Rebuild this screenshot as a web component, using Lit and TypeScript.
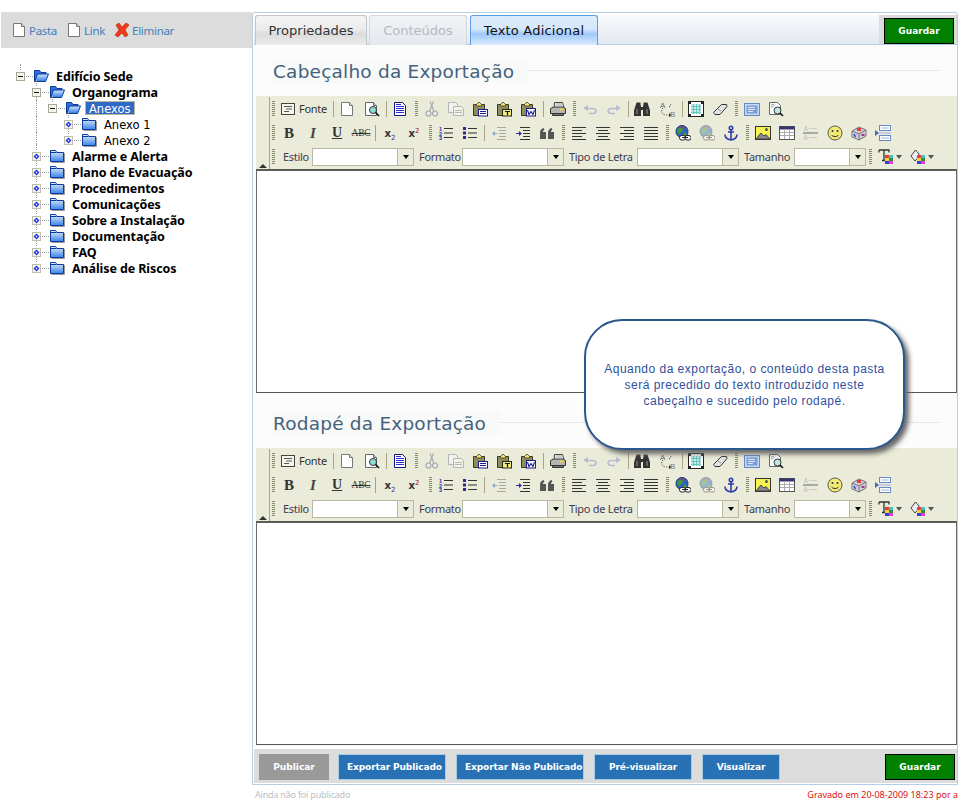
import { LitElement, html, css, svg } from "lit";
import { customElement } from "lit/decorators.js";
import { classMap } from "lit/directives/class-map.js";

const page = svg`<path d="M2.500 1.500h8l3 3v10h-11z" fill="#fff" stroke="#777"/><path d="M10.500 1.500v3h3" fill="#ddd" stroke="#777"/>`;
const clip = svg`<path d="M1.500 3.500h11v11h-11z" fill="#8f8c5c" stroke="#3b3a20"/><path d="M4.500 3.500l2.500-2.500 2.500 2.500v1.500h-5z" fill="#f2e27a" stroke="#3b3a20" stroke-width=".8"/>`;
const lines = (ys: number[], x1: number[], x2: number[], c = "#333") => ys.map((y, i) => svg`<path d="M${x1[i % x1.length]} ${y}.5H${x2[i % x2.length]}" stroke="${c}"/>`);
const swatch = (x: number, y: number) => svg`<rect x="${x}" y="${y}" width="4" height="3" fill="#e83a3a"/><rect x="${x + 4}" y="${y}" width="4" height="3" fill="#39c6c6"/><rect x="${x}" y="${y + 3}" width="4" height="3" fill="#e8d63a"/><rect x="${x + 4}" y="${y + 3}" width="4" height="3" fill="#3a8a3a"/><rect x="${x}" y="${y + 6}" width="4" height="3" fill="#3a3ae8"/><rect x="${x + 4}" y="${y + 6}" width="4" height="3" fill="#e83ad6"/>`;
const globe = svg`<circle cx="7" cy="6.500" r="6" fill="#2f62c4" stroke="#123a7c"/><path d="M3 3.500l3-1 2 2-1 2.500-2 .5-1.500 2-1-3zM8.500 7.500l3 .5-.5 3-2 1z" fill="#3f9a3c"/><path d="M5 2l3-.5 2 1.500-2 1z" fill="#c03a2e"/>`;
const chain = svg`<rect x="4.500" y="10.500" width="6" height="4.500" rx="2" fill="#fff" stroke="#222"/><rect x="10" y="10.500" width="6" height="4.500" rx="2" fill="#fff" stroke="#222"/><path d="M7 12.500h6" stroke="#222"/>`;

const icons: Record<string, unknown> = {
  source: svg`<rect x="1.500" y="2.500" width="13" height="11" fill="#f5f5ea" stroke="#444"/><path d="M4 5.500h8M6 8h6M4 10.500h5" stroke="#555"/>`,
  new: page,
  preview: svg`<path d="M1.500 1.500h8l3 3v10h-11z" fill="#fff" stroke="#666"/><path d="M9.500 1.500v3h3" fill="#ddd" stroke="#666"/><circle cx="9" cy="9" r="3.500" fill="#8fdcd6" stroke="#333"/><path d="M11.500 11.500l3.500 3.500" stroke="#111" stroke-width="1.600"/>`,
  templates: svg`<path d="M2.500 1.500h8l3 3v10h-11z" fill="#fff" stroke="#15157e"/><path d="M4 3.500h5M4 5.500h8M4 7.500h8M4 9.500h8M4 11.500h8" stroke="#2a2ad8"/>`,
  cut: svg`<g fill="none" stroke="#a8a8b4" stroke-width="1.200"><circle cx="4.500" cy="12.500" r="2.500"/><circle cx="11" cy="12.500" r="2.500"/><path d="M5.500 10l4-9.500M10 10L6 .5"/></g>`,
  copy: svg`<g fill="#f3f3ea" stroke="#b4b4ba"><path d="M0.500 1.500h7l2 2v8h-9z"/><path d="M5.500 5.500h8l2 2v7h-10z"/><path d="M7 9.500h7M7 11.500h7" fill="none"/></g>`,
  paste: svg`${clip}<rect x="6.500" y="8.500" width="9" height="6.500" fill="#fff" stroke="#1c1c8c"/><path d="M8 10.500h6M8 12.500h6" stroke="#1c1c8c"/>`,
  pastetext: svg`${clip}<rect x="6.500" y="8.500" width="9" height="6.500" fill="#f6ee7a" stroke="#222"/><path d="M9 10.500h5M11.500 10.500v3.500" stroke="#111" stroke-width="1.200"/>`,
  pasteword: svg`${clip}<rect x="6.500" y="7.500" width="9" height="7.500" fill="#fff" stroke="#1c1c8c"/><path d="M7.500 9l1.500 4.500 2-3 2 3L14.500 9" fill="none" stroke="#1c1c8c" stroke-width="1.100"/>`,
  print: svg`<path d="M4.500 1.500h8l1.500 5h-10z" fill="#fff" stroke="#444"/><path d="M0.500 7.500l3-1.500h9.500l2.500 1.500v5h-15z" fill="#b6b6b0" stroke="#333"/><path d="M2.500 12.500h11v2h-11z" fill="#777" stroke="#333"/><path d="M10 8.500h3" stroke="#e8d63a" stroke-width="2"/><path d="M5.500 3h7M5.500 5h7" stroke="#999"/>`,
  undo: svg`<path d="M3 7.500h7c2.500 0 4 1 4 2.500s-1 2.500-3.500 2.500H7" fill="none" stroke="#b8bcd0" stroke-width="1.500"/><path d="M1 7l5-3v6z" fill="#b8bcd0"/>`,
  redo: svg`<path d="M13 7.500H6c-2.500 0-4 1-4 2.500s1 2.500 3.500 2.500H9" fill="none" stroke="#b8bcd0" stroke-width="1.500"/><path d="M15 7l-5-3v6z" fill="#b8bcd0"/>`,
  find: svg`<g fill="#333"><path d="M2.500 1.500h4v3h.5V15H0V9.500z"/><path d="M13.500 1.500h-4v3H9V15h7V9.500z"/><rect x="6.500" y="6" width="3" height="3"/></g><path d="M3 8v5M13 8v5" stroke="#999"/>`,
  replace: svg`<path d="M4 7c-2.500 3-1.500 6.500 3 7h4M10 6c2-1 2-2 1.500-4" fill="none" stroke="#333" stroke-dasharray="1 1.500"/><path d="M10 12l2.500 2-2.500 2z" fill="#333"/><text x="1" y="6.500" font-family="Liberation Sans" font-size="8" fill="#666">A</text><text x="11" y="15.500" font-family="Liberation Sans" font-size="8" fill="#777">B</text>`,
  selectall: svg`<rect x="0.500" y="0.500" width="15" height="15" fill="#fff" stroke="#222"/><path d="M3 3h10v10H3z" fill="#c4eeeb"/><path d="M3 5.500h10M3 8.500h10M3 11.500h10M5.500 3v10M8.500 3v10M11.500 3v10" stroke="#6cc6bf"/><path d="M0 0h3v3H0zM13 0h3v3h-3zM0 13h3v3H0zM13 13h3v3h-3z" fill="#222"/>`,
  eraser: svg`<path d="M1.500 11.500l8-8h5l.5 2-7 8h-5z" fill="#e4e4e4" stroke="#333"/><path d="M5.500 8l3.500 2" stroke="#999"/>`,
  maximize: svg`<rect x="0.500" y="2.500" width="15" height="12" fill="#c8d8f4" stroke="#6a8ac4"/><rect x="2.500" y="4.500" width="11" height="8" fill="#7a9edc"/><path d="M4 6.500h7M4 8.500h7M4 10.500h5" stroke="#e0e8f8"/>`,
  blocks: svg`<path d="M1.500 1.500h8l3 3v9h-11z" fill="#fff" stroke="#666"/><text x="3" y="7" font-family="Liberation Sans" font-size="5" fill="#888">P</text><circle cx="9.500" cy="9.500" r="3.500" fill="#bfe8e4" stroke="#333"/><path d="M12 12l3 3" stroke="#111" stroke-width="1.600"/>`,
  ol: svg`<path d="M6 3.500h9M6 8h9M6 12.500h9" stroke="#333"/><text x="1" y="6" font-family="Liberation Sans" font-weight="bold" font-size="5.500" fill="#2a2ab0">1</text><text x="1" y="10.500" font-family="Liberation Sans" font-weight="bold" font-size="5.500" fill="#2a2ab0">2</text><text x="1" y="15" font-family="Liberation Sans" font-weight="bold" font-size="5.500" fill="#2a2ab0">3</text>`,
  ul: svg`<path d="M6 3.500h9M6 8h9M6 12.500h9" stroke="#333"/><path d="M1 2h3v3H1zM1 6.500h3v3H1zM1 11h3v3H1z" fill="#2a2a90"/>`,
  outdent: svg`<g stroke="#a8a8a0"><path d="M6 2.500h9M8 5.500h7M8 8.500h7M8 11.500h7M6 14.500h9"/></g><path d="M1 8.500h5" stroke="#8fa8d0"/><path d="M1 8.500l3-2.500v5z" fill="#8fa8d0"/>`,
  indent: svg`<g stroke="#333"><path d="M5 2.500h10M8 5.500h7M8 8.500h7M8 11.500h7M5 14.500h10"/></g><path d="M1 8.500h5" stroke="#2a2ab0"/><path d="M7 8.500l-3-2.500v5z" fill="#2a2ab0"/>`,
  quote: svg`<path d="M1 14V8c0-2.500 1-4 3.500-5l1 1.500C4.500 5 4 5.700 4 7h3v7zM9 14V8c0-2.500 1-4 3.500-5l1 1.500c-1 .5-1.500 1.200-1.500 2.500h3v7z" fill="#555"/>`,
  left: lines([2, 5, 8, 11, 14], [1], [15, 11, 15, 11, 15]),
  center: lines([2, 5, 8, 11, 14], [1, 3], [15, 13]),
  right: lines([2, 5, 8, 11, 14], [1, 5], [15]),
  justify: lines([2, 5, 8, 11, 14], [1], [15]),
  link: svg`${globe}${chain}`,
  unlink: svg`<g opacity=".42">${globe}${chain}</g>`,
  anchor: svg`<g fill="none" stroke="#2e3ea8" stroke-width="1.600"><circle cx="8" cy="3" r="1.700"/><path d="M8 5v10M5 7h6M2 9.500c0 3 3 5 6 5.500 3-.5 6-2.500 6-5.500"/></g>`,
  image: svg`<rect x="0.500" y="1.500" width="15" height="13" fill="#f6f050" stroke="#333"/><circle cx="11.500" cy="4.500" r="1.500" fill="#555"/><path d="M1 14l5-6 3 3 2-1.500 4 4.500z" fill="#888" stroke="#444"/>`,
  table: svg`<rect x="0.500" y="1.500" width="15" height="13" fill="#fff" stroke="#555"/><rect x="0.500" y="1.500" width="15" height="3" fill="#34346e"/><path d="M1 7.500h14M1 10.500h14M5.500 4v10M10.500 4v10" stroke="#aaa"/>`,
  hr: svg`<text x="0.500" y="6" font-family="Liberation Sans" font-size="6.500" fill="#bbb">A</text><text x="0.500" y="15" font-family="Liberation Sans" font-size="6.500" fill="#bbb">A</text><path d="M6 3.500h8M6 12.500h8" stroke="#ccc"/><path d="M0 8h15" stroke="#a8a8a8" stroke-width="2"/>`,
  smiley: svg`<circle cx="8" cy="8" r="7" fill="#f2ea72" stroke="#555"/><circle cx="5.500" cy="6" r="1" fill="#333"/><circle cx="10.500" cy="6" r="1" fill="#333"/><path d="M4.500 10c1 2 6 2 7 0" fill="none" stroke="#333"/>`,
  special: svg`<path d="M1 6l7-4 7 3v6l-7 4-7-3z" fill="#cfccd2" stroke="#777"/><path d="M1 6l7 3 7-4M8 9v6" fill="none" stroke="#777"/><rect x="6" y="3" width="4" height="3" fill="#e04040"/><path d="M3 9l1.500 3" stroke="#3a3ae8" stroke-width="1.500"/><path d="M10.500 10h3" stroke="#a03a9a" stroke-width="2"/>`,
  pagebreak: svg`<rect x="4.500" y="0.500" width="11" height="5" fill="#fff" stroke="#6a8ac4"/><rect x="4.500" y="10.500" width="11" height="5" fill="#fff" stroke="#6a8ac4"/><path d="M6 3h8M6 13h8" stroke="#9ab4dc"/><path d="M4 8h12" stroke="#9ab4dc"/><path d="M0 5l4 3-4 3z" fill="#3a6ac4"/>`,
};

const labels: Record<string, { c: string; t: unknown }> = {
  bold: { c: "g-b", t: "B" },
  italic: { c: "g-i", t: "I" },
  underline: { c: "g-u", t: "U" },
  strike: { c: "g-s", t: "ABC" },
  sub: { c: "g-x", t: html`x<sub>2</sub>` },
  sup: { c: "g-x", t: html`x<sup>2</sup>` },
};

const ROW1 = ["grip", "fonte", "sep", "new", "_", "preview", "sep", "templates", "grip", "cut", "copy", "paste", "pastetext", "pasteword", "_", "sep", "_", "print", "grip", "undo", "redo", "sep", "find", "_", "replace", "_", "sep", "selectall", "eraser", "grip", "maximize", "blocks"];
const ROW2 = ["grip", "bold", "italic", "underline", "strike", "sep", "_", "sub", "sup", "grip", "ol", "ul", "sep", "_", "outdent", "indent", "quote", "grip", "left", "center", "right", "justify", "grip", "link", "unlink", "anchor", "grip", "image", "table", "hr", "smiley", "special", "pagebreak"];

interface Node { t: string; lv: number; line?: number[]; open?: boolean; up?: boolean; down?: boolean; b?: boolean; sel?: boolean }
const L1 = [1];
const TREE: Node[] = [
  { t: "Edifício Sede", lv: 0, open: true, b: true, up: true },
  { t: "Organograma", lv: 1, open: true, b: true, up: true, down: true },
  { t: "Anexos", lv: 2, open: true, sel: true, line: L1, up: true },
  { t: "Anexo 1", lv: 3, line: L1, up: true, down: true },
  { t: "Anexo 2", lv: 3, line: L1, up: true },
  ...["Alarme e Alerta", "Plano de Evacuação", "Procedimentos", "Comunicações", "Sobre a Instalação", "Documentação", "FAQ"].map((t) => ({ t, lv: 1, b: true, up: true, down: true })),
  { t: "Análise de Riscos", lv: 1, b: true, up: true },
];

const folderOpen = html`<svg class="ic" viewBox="0 0 16 16"><defs><linearGradient id="fo" x1="0" y1="0" x2="0" y2="1"><stop offset="0" stop-color="#d4e8ff"/><stop offset="1" stop-color="#2f7ae0"/></linearGradient></defs><path d="M1.500 13.500V2.500h5l1.500 2h5v2" fill="#2f6fd8" stroke="#0b3a9c"/><path d="M1.500 13.500l3-7.500h11l-3 7.500z" fill="url(#fo)" stroke="#0b3a9c"/></svg>`;
const folderClosed = html`<svg class="ic" viewBox="0 0 16 16"><defs><linearGradient id="fc" x1="0" y1="0" x2="0" y2="1"><stop offset="0" stop-color="#e4f0ff"/><stop offset="1" stop-color="#3a84e4"/></linearGradient></defs><path d="M1.500 13.500V2.500h5l1.500 2h6.500v9z" fill="url(#fc)" stroke="#0b3a9c"/><path d="M2 4.500h5.500" stroke="#0b3a9c"/><path d="M2.500 14.500h13M15.500 5v9.500" stroke="#9a9a9a"/></svg>`;

@customElement("app-root")
export class AppRoot extends LitElement {
  static styles = css`
    :host { display: block; width: 960px; height: 806px; overflow: hidden; background: #fff; position: relative; font-family: "Liberation Sans", sans-serif; }
    .page { display: flex; height: 806px; padding-top: 12px; box-sizing: border-box; }
    .side { width: 251px; margin-left: 1px; flex: none; }
    .actions { height: 36px; background: #dcdcdc; display: flex; align-items: center; padding-left: 10px; gap: 9px; font: 11.500px "Noto Sans", sans-serif; letter-spacing: -0.300px; color: #3f7fbd; }
    .act { display: flex; align-items: center; gap: 2px; }
    .ic { width: 16px; height: 16px; display: block; flex: none; }
    .tree { padding: 20px 0 0 11px; font: 11.500px "DejaVu Sans", sans-serif; color: #000; }
    .row { display: flex; height: 16px; align-items: center; }
    .ind { width: 16px; height: 16px; flex: none; position: relative; }
    .ind.vl::before, .exp.up::before, .exp.down::after { content: ""; position: absolute; left: 8px; border-left: 1px dotted #999; }
    .ind.vl::before { top: 0; bottom: 0; }
    .exp { width: 21px; height: 16px; flex: none; position: relative; }
    .exp.up::before { top: -4px; height: 6px; }
    .exp.down::after { top: 8px; height: 8px; }
    .joint { position: absolute; left: 14px; right: 0; top: 8px; border-top: 1px dotted #999; }
    .box { position: absolute; left: 4px; top: 4px; width: 9px; height: 9px; display: block; z-index: 1; }
    .lab { margin-left: 7px; margin-top: 2px; white-space: nowrap; }
    .lab.b { font: bold 12.500px "Noto Sans", sans-serif; letter-spacing: -0.100px; margin-top: 0; }
    .lab.sel { margin-left: 4px; margin-top: 0; padding: 0 3px; background: #316ac5; color: #fff; height: 14px; line-height: 14px; }

    .main { flex: 1; min-width: 0; margin: 0 2px 0 0; display: flex; flex-direction: column; }
    .panel { height: 773px; box-sizing: border-box; border: 1px solid #b4cfe4; border-radius: 3px 3px 0 0; padding: 2px 0 1px 1px; display: flex; flex-direction: column; background: #fff; }
    .tabs { height: 30px; flex: none; display: flex; box-sizing: border-box; background: linear-gradient(#f9fafb, #e3e9f1); border-bottom: 1px solid #b4cde4; padding-left: 1px; }
    .tab { box-sizing: border-box; height: 30px; border: 1px solid #c3c6ca; border-bottom: none; border-radius: 3px 3px 0 0; background: linear-gradient(#f4f4f4 0, #ececec 45%, #dcdcdc 62%, #ececec 100%); font: 13px "DejaVu Sans", sans-serif; color: #333; display: flex; align-items: center; justify-content: center; }
    .t1 { width: 112px; margin-right: 2px; }
    .t2 { width: 98px; margin-right: 3px; color: #b5b9bf; background: linear-gradient(#f1f3f5, #e4e8ed); border-color: #d4d8dc; }
    .t3 { width: 128px; color: #111; border-color: #5a9ee8; letter-spacing: 0.200px; background: linear-gradient(#dcecfc 0, #d6e8fc 45%, #9ec8fb 62%, #dbeafd 100%); }
    .tabfill { flex: 1; }
    .tabsave { width: 78px; background: #dcdcdc; display: flex; align-items: flex-start; padding: 3px 0 0 5px; box-sizing: border-box; }
    .btn { box-sizing: border-box; height: 26px; display: flex; align-items: center; justify-content: center; font: bold 9px "DejaVu Sans", sans-serif; color: #fff; flex: none; white-space: nowrap; }
    .green { background: #008000; border: 1px solid #000; width: 70px; }
    .blue { background: #2971b5; border: 1px solid #a6cbe4; letter-spacing: -0.100px; }
    .grey { background: #999; width: 70px; }
    .w1 { width: 108px; justify-content: flex-start; padding-left: 8px; }
    .w2 { width: 128px; justify-content: flex-start; padding-left: 8px; }
    .w3 { width: 98px; } .w4 { width: 78px; }

    .body { flex: 1; display: flex; flex-direction: column; background: #fcfcfc; padding: 0 0 0 2px; }
    .head { height: 51px; flex: none; display: flex; align-items: center; padding-left: 17px; padding-right: 18px; }
    .head.second { height: 55px; padding-top: 3px; box-sizing: border-box; }
    .head span { margin-top: 2px; font: 18.500px "DejaVu Sans", sans-serif; letter-spacing: 0.200px; color: #45627b; background: #f8f9f9; padding: 1px 15px 1px 0; }
    .head i { flex: 1; border-top: 1px solid #dfe8e8; }
    .bar { height: 73px; flex: none; box-sizing: border-box; background: #ebebd9; display: flex; position: relative; padding-top: 1px; }
    .strip { width: 13px; flex: none; border-right: 1px solid #a9a985; position: relative; }
    .strip::after { content: ""; position: absolute; left: 3px; bottom: 1px; border: 4px solid transparent; border-top: none; border-bottom: 4px solid #333; }
    .rows { flex: 1; margin-left: -1px; }
    .trow { height: 24px; display: flex; align-items: center; }
    .cell { width: 24px; height: 24px; flex: none; display: flex; align-items: center; justify-content: center; color: #333; }
    .sp { width: 1px; flex: none; }
    .sep { width: 4px; flex: none; display: flex; justify-content: center; }
    .sep::before { content: ""; width: 1px; height: 16px; background: #a5a57e; }
    .grip { width: 8px; flex: none; display: flex; justify-content: center; }
    .grip::before { content: ""; width: 3px; height: 16px; background: repeating-linear-gradient(#87876a 0 1px, transparent 1px 2px); }
    .fonte { width: 54px; height: 22px; margin-bottom: 2px; flex: none; display: flex; align-items: center; padding-left: 3px; box-sizing: border-box; gap: 3px; font: 11px "Noto Sans", sans-serif; letter-spacing: -0.300px; color: #333; }
    .fonte .ic { margin-top: 2px; }
    .g-b { font: bold 15px "Liberation Serif", serif; }
    .g-i { font: italic bold 15px "Liberation Serif", serif; color: #444; }
    .g-u { font: bold 14px "Liberation Serif", serif; text-decoration: underline; }
    .g-s { font: 9.500px "Liberation Serif", serif; text-decoration: line-through; letter-spacing: -0.200px; }
    .g-x { font: bold 10px "DejaVu Sans", sans-serif; }
    .g-x sub, .g-x sup { font: 7px "DejaVu Sans", sans-serif; color: #33339c; line-height: 0; }
    .g-x sup { color: #a02020; }
    .cap { flex: none; box-sizing: border-box; margin-top: -2px; font: 11px "Noto Sans", sans-serif; letter-spacing: -0.300px; color: #3c3c50; white-space: nowrap; }
    .c1 { width: 35px; padding-left: 6px; }
    .c2 { width: 48px; padding-left: 5px; }
    .c3 { width: 73px; padding-left: 5px; }
    .c4 { width: 55px; padding-left: 5px; }
    .sel { box-sizing: border-box; flex: none; height: 18px; border: 1px solid #b7b7a2; display: flex; background: #fff; }
    .s-l { width: 102px; } .s-s { width: 72px; }
    .sel b { flex: 1; }
    .sel u { width: 15px; border-left: 1px solid #b7b7a2; background: #ebebd9; display: flex; align-items: center; justify-content: center; }
    .tri { width: 0; height: 0; border: 3.500px solid transparent; border-bottom: none; border-top: 4px solid #000; }
    .color { width: 32px; flex: none; display: flex; align-items: center; gap: 2px; padding-left: 4px; box-sizing: border-box; }
    .color .tri { border-top-color: #555; }
    .area { height: 224px; flex: none; box-sizing: border-box; background: #fff; border: 1px solid #6b6b6b; border-top: 2px solid #5a5a5a; border-bottom-color: #555; }
    .foot { flex: none; margin-top: 3px; height: 34px; background: #dcdcdc; display: flex; align-items: center; padding: 2px 0 0 5px; box-sizing: border-box; }
    .foot .grey { margin-right: 9px; }
    .foot .w1, .foot .w2, .foot .w3 { margin-right: 10px; }
    .foot .fill { flex: 1; }
    .foot .green { margin-right: 2px; }
    .status { display: flex; justify-content: space-between; padding: 3px 0 0 3px; font: 9px "Noto Sans", sans-serif; height: 14px; line-height: 14px; }
    .st-l { color: #bdbdbd; letter-spacing: -0.200px; }
    .st-r { color: #e01010; }
    .callout { position: absolute; left: 584px; top: 319px; width: 321px; height: 131px; box-sizing: border-box; border: 2px solid #2b588c; border-radius: 38px; background: #fff; box-shadow: 4px 4px 5px #666; display: flex; align-items: center; justify-content: center; text-align: center; font: 12px/16px "Liberation Sans", sans-serif; letter-spacing: 0.480px; color: #2f4f9c; }
  `;

  private token(k: string) {
    if (k === "_") return html`<span class="sp"></span>`;
    if (k === "sep") return html`<span class="sep"></span>`;
    if (k === "grip") return html`<span class="grip"></span>`;
    if (k === "fonte") return html`<span class="fonte">${this.icon("source")}Fonte</span>`;
    const l = labels[k];
    if (l) return html`<span class="cell"><span class=${l.c}>${l.t}</span></span>`;
    return html`<span class="cell">${this.icon(k)}</span>`;
  }

  private icon(k: string) {
    return html`<svg class="ic" viewBox="0 0 16 16">${icons[k]}</svg>`;
  }

  private select(cls: string) {
    return html`<span class="sel ${cls}"><b></b><u><span class="tri"></span></u></span>`;
  }

  private editor(title: string, second: boolean) {
    return html`
      <div class="head ${second ? "second" : ""}"><span>${title}</span><i></i></div>
      <div class="bar">
        <div class="strip"></div>
        <div class="rows">
          <div class="trow">${ROW1.map((k) => this.token(k))}</div>
          <div class="trow">${ROW2.map((k) => this.token(k))}</div>
          <div class="trow">
            <span class="grip"></span>
            <span class="cap c1">Estilo</span>${this.select("s-l")}
            <span class="cap c2">Formato</span>${this.select("s-l")}
            <span class="cap c3">Tipo de Letra</span>${this.select("s-l")}
            <span class="cap c4">Tamanho</span>${this.select("s-s")}
            <span class="grip"></span>
            <span class="color"><svg class="ic" viewBox="0 0 16 16"><path d="M1 1h10v2.500M1 1v2.500M6 1v10M4 11.500h4" fill="none" stroke="#333" stroke-width="1.300"/>${swatch(7, 6)}</svg><span class="tri"></span></span>
            <span class="color"><svg class="ic" viewBox="0 0 16 16"><path d="M5.500 1l-4.500 6 4 5 4-4.500V5z" fill="#eee" stroke="#444"/>${swatch(7, 6)}</svg><span class="tri"></span></span>
          </div>
        </div>
      </div>
      <div class="area"></div>`;
  }

  private node(n: Node) {
    const box = n.open
      ? html`<svg class="box" viewBox="0 0 9 9"><rect x=".5" y=".5" width="8" height="8" fill="#f6f6f0" stroke="#a7a68f"/><path d="M2 4.500h5" stroke="#111"/></svg>`
      : html`<svg class="box" viewBox="0 0 9 9"><rect x=".5" y=".5" width="8" height="8" fill="#f6f6f0" stroke="#c0bfa8"/><path d="M4.500 1.500l3 3-3 3-3-3z" fill="#2a3ae0"/><path d="M4.500 3.500l1 1-1 1-1-1z" fill="#fff"/></svg>`;
    const inds = [];
    for (let i = 0; i < n.lv; i++) inds.push(html`<span class=${classMap({ ind: true, vl: !!n.line?.includes(i) })}></span>`);
    return html`<div class="row">
      ${inds}
      <span class=${classMap({ exp: true, up: !!n.up, down: !!n.down })}>${box}<span class="joint"></span></span>
      ${n.open ? folderOpen : folderClosed}
      <span class=${classMap({ lab: true, b: !!n.b, sel: !!n.sel })}>${n.t}</span>
    </div>`;
  }

  render() {
    return html`
      <div class="page">
        <aside class="side">
          <div class="actions">
            <span class="act">${this.icon("new")}Pasta</span>
            <span class="act">${this.icon("new")}Link</span>
            <span class="act"><svg class="ic" viewBox="0 0 16 16"><path d="M2 3l3-2 3 4 4-4 3 2-4 5 3 5-3 2-3-4-4 4-3-2 4-5z" fill="#ee3b1c" stroke="#b8340f" stroke-width=".7"/></svg>Eliminar</span>
          </div>
          <div class="tree">${TREE.map((n) => this.node(n))}</div>
        </aside>
        <main class="main">
          <div class="panel">
            <div class="tabs">
              <div class="tab t1">Propriedades</div>
              <div class="tab t2">Conteúdos</div>
              <div class="tab t3">Texto Adicional</div>
              <div class="tabfill"></div>
              <div class="tabsave"><span class="btn green">Guardar</span></div>
            </div>
            <div class="body">
              ${this.editor("Cabeçalho da Exportação", false)}
              ${this.editor("Rodapé da Exportação", true)}
            </div>
            <div class="foot">
              <span class="btn grey">Publicar</span>
              <span class="btn blue w1">Exportar Publicado</span>
              <span class="btn blue w2">Exportar Não Publicado</span>
              <span class="btn blue w3">Pré-visualizar</span>
              <span class="btn blue w4">Visualizar</span>
              <span class="fill"></span>
              <span class="btn green">Guardar</span>
            </div>
          </div>
          <div class="status"><span class="st-l">Ainda não foi publicado</span><span class="st-r">Gravado em 20-08-2009 18:23 por a</span></div>
        </main>
      </div>
      <div class="callout">Aquando da exportação, o conteúdo desta pasta<br />será precedido do texto introduzido neste<br />cabeçalho e sucedido pelo rodapé.</div>
    `;
  }
}
